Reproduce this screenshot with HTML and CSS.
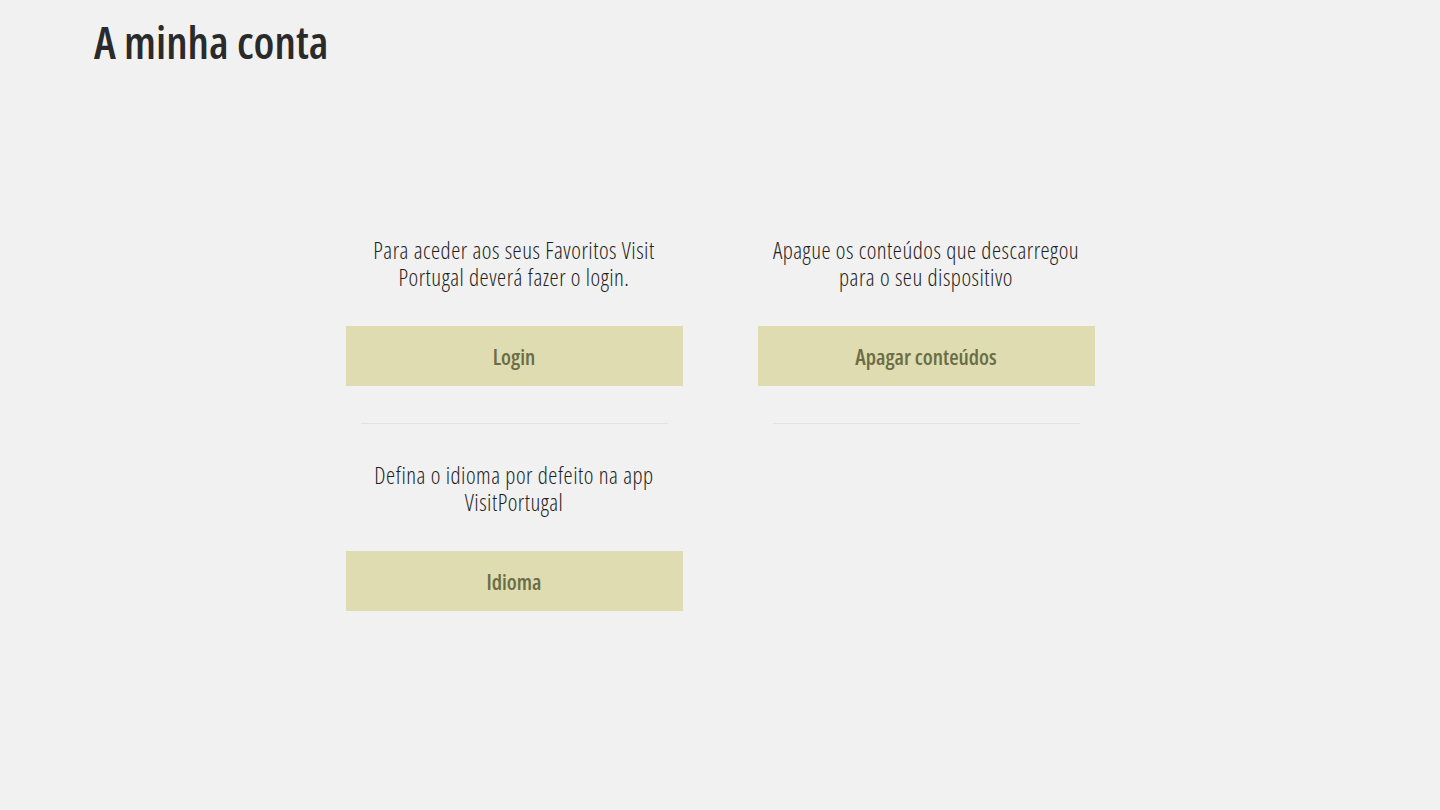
FILE: index.html
```html
<!DOCTYPE html>
<html lang="pt">
<head>
<meta charset="utf-8">
<title>A minha conta</title>
<link rel="stylesheet" href="styles.css">
</head>
<body>
<header class="header">
  <h1 class="title">A minha conta</h1>
</header>
<main class="grid">
  <section class="card">
    <p class="desc">Para aceder aos seus Favoritos Visit Portugal deverá fazer o login.</p>
    <button class="btn">Login</button>
    <hr class="sep">
  </section>
  <section class="card">
    <p class="desc">Apague os conteúdos que descarregou para o seu dispositivo</p>
    <button class="btn">Apagar conteúdos</button>
    <hr class="sep">
  </section>
  <section class="card">
    <p class="desc">Defina o idioma por defeito na app VisitPortugal</p>
    <button class="btn">Idioma</button>
  </section>
</main>
</body>
</html>
```
FILE: styles.css
```css
html, body {
  margin: 0;
  padding: 0;
  height: 100%;
}
body {
  background: #f1f1f1;
  font-family: "Open Sans", "DejaVu Sans Condensed", sans-serif;
  font-stretch: 75%;
  color: #2b2b2b;
}
.header {
  padding: 16px 94px 0;
}
.title {
  margin: 0;
  font-size: 45px;
  line-height: 52px;
  font-weight: 600;
  color: #2a2a2a;
}
.grid {
  display: grid;
  grid-template-columns: 337px 337px;
  column-gap: 75px;
  justify-content: center;
  margin-top: 169px;
}
.card {
  display: flex;
  flex-direction: column;
  align-items: stretch;
}
.desc {
  margin: 0 10px;
  text-align: center;
  font-size: 23px;
  line-height: 27px;
  font-weight: 300;
  letter-spacing: 0.5px;
  color: #1f1f1f;
}
.btn {
  margin-top: 35px;
  height: 60px;
  border: 0;
  background: #dedcb0;
  color: #6b6d45;
  font-family: inherit;
  font-stretch: inherit;
  font-size: 21.5px;
  font-weight: 600;
  padding: 0;
}
.sep {
  margin: 37px 15px 38px;
  border: 0;
  height: 1px;
  background: #e2e2e2;
}
```
